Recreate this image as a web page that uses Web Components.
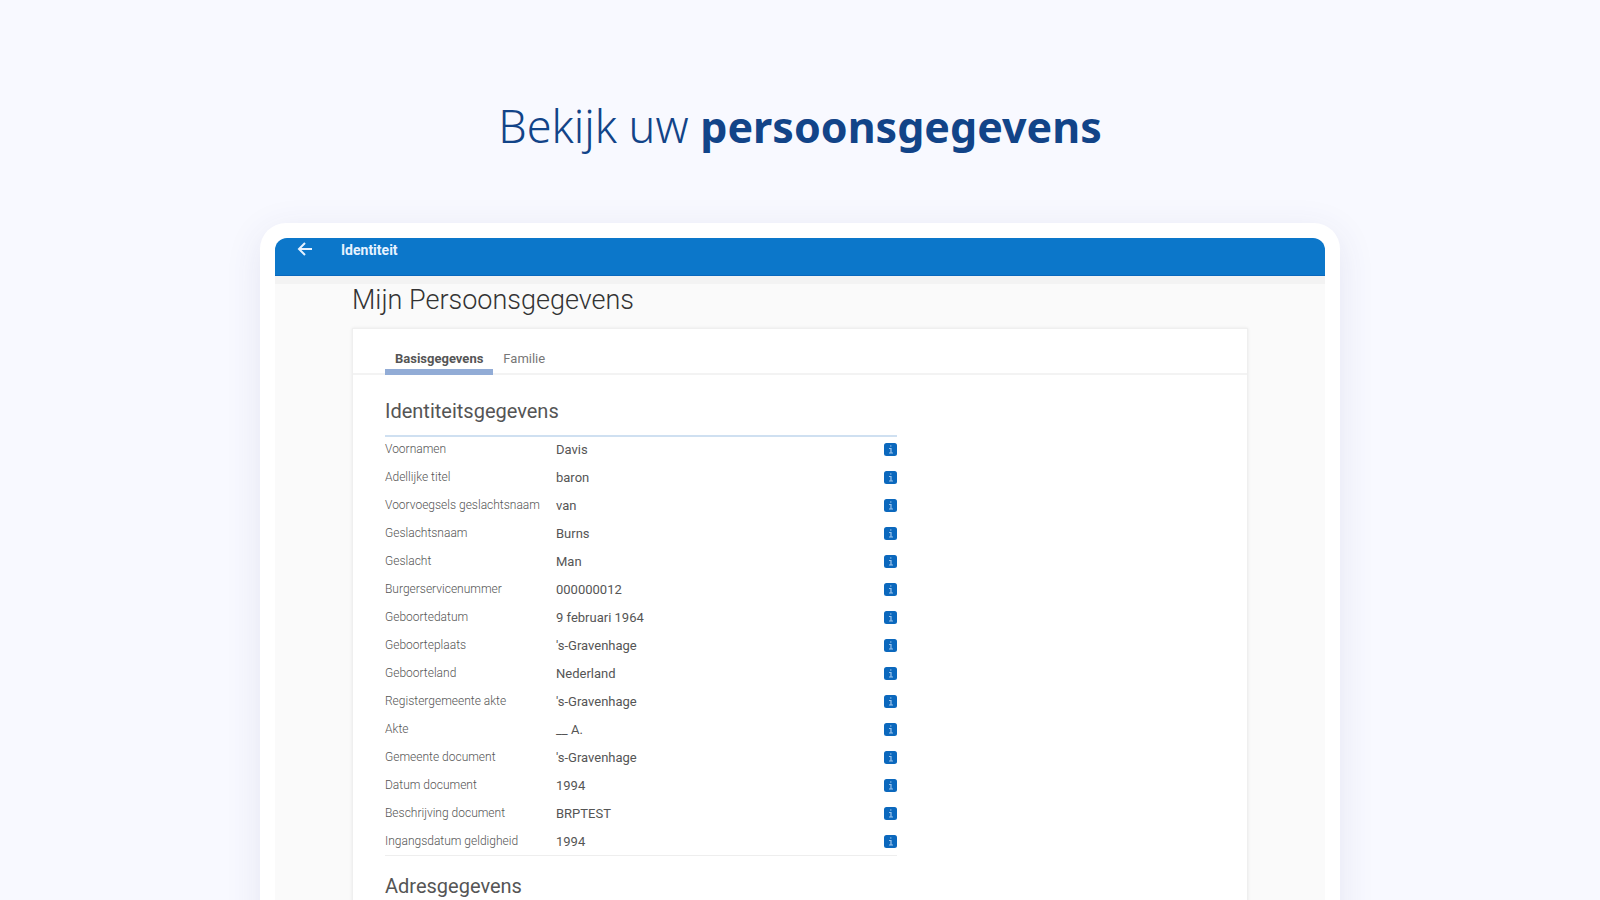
<!DOCTYPE html>
<html lang="nl">
<head>
<meta charset="utf-8">
<meta name="viewport" content="width=device-width, initial-scale=1">
<title>Persoonsgegevens</title>
<style>
  body {
    margin: 0;
    background: #f8f9ff;
    font-family: Roboto, sans-serif;
    color: #444;
  }

  strong {
    font-size: 43px;
    font-weight: 700;
  }
</style>
</head>
<body>
<promo-page>
  <span slot="title">Bekijk uw <strong>persoonsgegevens</strong></span>
  <device-frame>
    <app-bar label="Identiteit"></app-bar>
    <person-page></person-page>
  </device-frame>
</promo-page>

<script>
class PromoPage extends HTMLElement {
  constructor() {
    super();
    this.attachShadow({ mode: "open" });
  }

  connectedCallback() {
    this.shadowRoot.innerHTML = `
      <style>
        :host {
          display: flex;
          flex-direction: column;
          align-items: center;
          height: 100vh;
          overflow: hidden;
        }
        h1 {
          flex: none;
          height: 60px;
          margin: 0;
          padding: 96px 0 67px;
          font: 300 45px/60px "Noto Sans", sans-serif;
          color: #124488;
        }
        ::slotted(span) { white-space: nowrap; }
      </style>
      <h1><slot name="title"></slot></h1>
      <slot></slot>
    `;
  }
}

class DeviceFrame extends HTMLElement {
  constructor() {
    super();
    this.attachShadow({ mode: "open" });
  }

  connectedCallback() {
    this.shadowRoot.innerHTML = `
      <style>
        :host {
          display: block;
          box-sizing: border-box;
          flex: none;
          width: 67.5%;
          padding: 15px;
          border-radius: 26px 26px 0 0;
          background: #fff;
          box-shadow: 0 8px 36px rgba(60, 60, 130, 0.1);
        }
        .screen {
          overflow: hidden;
          border-radius: 12px 12px 0 0;
          background: #fafafa;
        }
      </style>
      <div class="screen"><slot></slot></div>
    `;
  }
}

class AppBar extends HTMLElement {
  constructor() {
    super();
    this.attachShadow({ mode: "open" });
  }

  connectedCallback() {
    this.shadowRoot.innerHTML = `
      <style>
        :host {
          display: flex;
          align-items: flex-start;
          gap: 28px;
          height: 38px;
          padding: 0 22px;
          box-sizing: border-box;
          background: #0c77ca;
          border-bottom: 1px solid #0968bd;
          color: #fff;
        }
        button {
          display: flex;
          padding: 3px 0 0;
          border: 0;
          background: none;
          color: #e6f2ff;
        }
        svg { display: block; width: 16px; height: 16px; }
        span { font-size: 14px; font-weight: 700; line-height: 24px; color: #e6f2ff; }
      </style>
      <button type="button" aria-label="Terug">
        <svg viewBox="0 0 16 16" fill="none" stroke="currentColor" stroke-width="2">
          <path d="M15 8H2M8 2L2 8l6 6"/>
        </svg>
      </button>
      <span>${this.getAttribute("label")}</span>
    `;
  }
}

class PersonPage extends HTMLElement {
  constructor() {
    super();
    this.attachShadow({ mode: "open" });
  }

  connectedCallback() {
    this.shadowRoot.innerHTML = `
      <style>
        :host {
          display: block;
          padding: 0 77px;
          border-top: 8px solid #f3f3f3;
        }
        h2 {
          margin: 0;
          font-size: 27px;
          font-weight: 300;
          line-height: 32px;
          color: #333;
        }
        .card {
          margin-top: 12px;
          background: #fff;
          border: 1px solid #efefef;
          box-shadow: 0 0 3px rgba(0, 0, 0, 0.08);
        }
        .sections { width: 512px; max-width: 100%; padding: 22px 32px; }
      </style>
      <h2>Mijn Persoonsgegevens</h2>
      <div class="card">
        <tab-bar></tab-bar>
        <div class="sections">
          <data-section heading="Identiteitsgegevens"></data-section>
          <data-section heading="Adresgegevens"></data-section>
        </div>
      </div>
    `;
  }
}

class TabBar extends HTMLElement {
  constructor() {
    super();
    this.attachShadow({ mode: "open" });
  }

  connectedCallback() {
    this.shadowRoot.innerHTML = `
      <style>
        :host {
          display: flex;
          padding: 20px 32px 0;
          border-bottom: 2px solid #f3f3f3;
        }
        button {
          margin-bottom: -2px;
          padding: 0 10px;
          border: 0;
          border-bottom: 6px solid transparent;
          background: none;
          font: 400 13px/20px Roboto, sans-serif;
          color: #777;
        }
        button[aria-selected="true"] {
          border-color: #92acd6;
          font-weight: 700;
          color: #555;
        }
      </style>
      <button type="button" role="tab" aria-selected="true">Basisgegevens</button>
      <button type="button" role="tab" aria-selected="false">Familie</button>
    `;
    this.setAttribute("role", "tablist");
  }
}

const SECTIONS = {
  Identiteitsgegevens: [
    ["Voornamen", "Davis"],
    ["Adellijke titel", "baron"],
    ["Voorvoegsels geslachtsnaam", "van"],
    ["Geslachtsnaam", "Burns"],
    ["Geslacht", "Man"],
    ["Burgerservicenummer", "000000012"],
    ["Geboortedatum", "9 februari 1964"],
    ["Geboorteplaats", "'s-Gravenhage"],
    ["Geboorteland", "Nederland"],
    ["Registergemeente akte", "'s-Gravenhage"],
    ["Akte", "__ A."],
    ["Gemeente document", "'s-Gravenhage"],
    ["Datum document", "1994"],
    ["Beschrijving document", "BRPTEST"],
    ["Ingangsdatum geldigheid", "1994"],
  ],
  Adresgegevens: [],
};

class DataSection extends HTMLElement {
  constructor() {
    super();
    this.attachShadow({ mode: "open" });
  }

  connectedCallback() {
    const heading = this.getAttribute("heading");
    const rows = SECTIONS[heading]
      .map(([label, value]) => `
        <tr>
          <th scope="row">${label}</th>
          <td>${value}</td>
          <td class="info"><info-button label="Uitleg bij ${label}"></info-button></td>
        </tr>`)
      .join("");

    this.shadowRoot.innerHTML = `
      <style>
        :host { display: block; }
        h3 {
          margin: 0;
          padding-bottom: 10px;
          font-size: 20px;
          font-weight: 400;
          line-height: 28px;
          color: #555;
          border-bottom: 2px solid #cfe0f1;
        }
        table {
          width: 100%;
          margin: -2px 0 16px;
          border-collapse: collapse;
          border-bottom: 1px solid #eee;
        }
        th, td { height: 28px; padding: 0; text-align: left; }
        th { width: 171px; font-size: 12px; font-weight: 300; color: #555; }
        td { font-size: 13px; color: #555; }
        .info { width: 13px; }
      </style>
      <h3>${heading}</h3>
      <table><tbody>${rows}</tbody></table>
    `;
  }
}

class InfoButton extends HTMLElement {
  constructor() {
    super();
    this.attachShadow({ mode: "open" });
  }

  connectedCallback() {
    this.shadowRoot.innerHTML = `
      <style>
        :host { display: block; }
        button { display: block; padding: 0; border: 0; background: none; }
        svg { display: block; width: 13px; height: 13px; }
      </style>
      <button type="button" aria-label="${this.getAttribute("label")}">
        <svg viewBox="0 0 13 13">
          <rect width="13" height="13" rx="2.5" fill="#0b68bd"/>
          <path d="M5 5.500h2V10M5 10h4M6 3h1.500" fill="none" stroke="#9cc4ec" stroke-width="1.200"/>
        </svg>
      </button>
    `;
  }
}

customElements.define("promo-page", PromoPage);
customElements.define("device-frame", DeviceFrame);
customElements.define("app-bar", AppBar);
customElements.define("person-page", PersonPage);
customElements.define("tab-bar", TabBar);
customElements.define("data-section", DataSection);
customElements.define("info-button", InfoButton);
</script>
</body>
</html>
